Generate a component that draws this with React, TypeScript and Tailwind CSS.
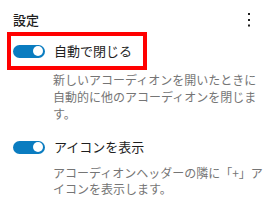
import React from "react";

function Toggle() {
  return (
    <span className="relative inline-flex h-[13px] w-[32px] shrink-0 items-center rounded-full bg-[#0a7cc0]">
      <span className="absolute right-[2px] h-[10px] w-[10px] rounded-full bg-white" />
    </span>
  );
}

export default function App() {
  return (
    <div className="h-[205px] w-[270px] overflow-hidden bg-white font-['Noto_Sans_CJK_JP',sans-serif]">
      <div className="flex h-[32px] items-center justify-between pl-[13px] pr-[20px] pt-[7px]">
        <span className="text-[13px] font-medium leading-[16px] text-[#1e1e1e]">設定</span>
        <svg width="2" height="14" viewBox="0 0 2 14" className="block">
          <rect x="0" y="0" width="2" height="2" fill="#1e1e1e" />
          <rect x="0" y="6" width="2" height="2" fill="#1e1e1e" />
          <rect x="0" y="11.5" width="2" height="2" fill="#1e1e1e" />
        </svg>
      </div>

      <div className="ml-[7px] flex h-[38px] w-[140px] items-center gap-[9px] border-4 border-[#ff0000] pl-[2px]">
        <Toggle />
        <span className="text-[13px] leading-[16px] text-[#1e1e1e]">自動で閉じる</span>
      </div>
      <p className="mt-[1px] w-[263px] pl-[53px] text-[12px] leading-[17px] text-[#757575]">
        新しいアコーディオンを開いたときに自動的に他のアコーディオンを閉じます。
      </p>

      <div className="mt-[15px] flex h-[20px] items-center gap-[9px] pl-[13px]">
        <Toggle />
        <span className="text-[13px] leading-[16px] text-[#1e1e1e]">アイコンを表示</span>
      </div>
      <p className="mt-[8px] w-[263px] pl-[53px] text-[12px] leading-[16px] text-[#757575]">
        アコーディオンヘッダーの隣に「+」アイコンを表示します。
      </p>
    </div>
  );
}
